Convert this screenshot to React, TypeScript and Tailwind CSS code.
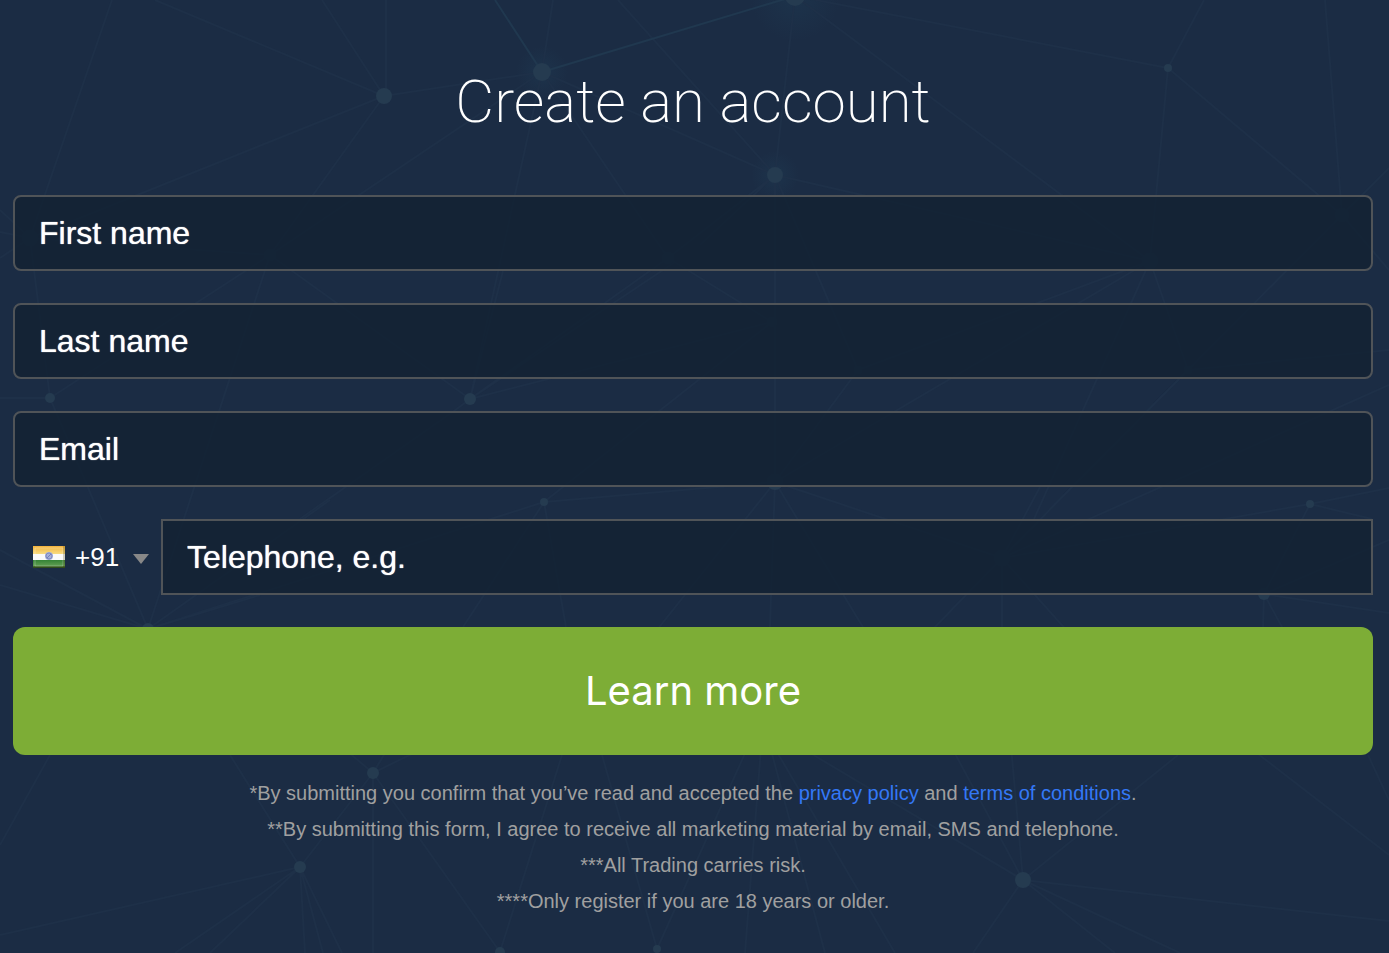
import { useState } from "react";

const NODES = [
  { x: 384, y: 96, r: 8 },
  { x: 542, y: 72, r: 9 },
  { x: 795, y: -4, r: 10 },
  { x: 775, y: 175, r: 8 },
  { x: 1168, y: 68, r: 4 },
  { x: 30, y: 238, r: 8 },
  { x: 270, y: 255, r: 6 },
  { x: 50, y: 398, r: 5 },
  { x: 470, y: 399, r: 6 },
  { x: 668, y: 258, r: 6 },
  { x: 1150, y: 261, r: 8 },
  { x: 1342, y: 215, r: 7 },
  { x: 772, y: 322, r: 5 },
  { x: 858, y: 370, r: 4 },
  { x: 1188, y: 370, r: 4 },
  { x: 775, y: 482, r: 8 },
  { x: 544, y: 502, r: 4 },
  { x: 1310, y: 504, r: 4 },
  { x: 1002, y: 558, r: 8 },
  { x: 1264, y: 594, r: 6 },
  { x: 148, y: 629, r: 6 },
  { x: 373, y: 773, r: 6 },
  { x: 300, y: 867, r: 6 },
  { x: 1023, y: 880, r: 8 },
  { x: 500, y: 952, r: 5 },
  { x: 657, y: 949, r: 4 },
];

// One fan of lines per hub
const LINES = [
  "M112 0L30 238M155 0L384 96M322 0L384 96M386 0V96M384 96L542 72M384 96L30 238M384 96L270 255",
  "M553 0L542 72L270 255M542 72L470 399M542 72L668 258M542 72L775 175L618 0",
  "M795 -4L775 175M795 -4L1168 68M795 -4L1150 261M1204 0L1168 68L1150 261M1168 68L1342 215M1325 0L1342 215L1389 168M1342 215L1389 270",
  "M775 175L668 258M775 175L700 245M775 175V482M775 175L858 370M775 175L1150 261",
  "M0 210L30 238M0 232L30 238M0 258L30 238L50 398M270 255L50 398M270 255L148 629M270 255L470 399M30 238L270 255",
  "M668 258L470 399M675 262L470 399M668 258L772 322M470 399L772 322M470 399L503 271M470 399L454 411L300 519",
  "M1150 261L858 370M1150 261L775 482M1150 261L1034 519M1150 261L1188 370M1342 215L1188 370L1002 558",
  "M0 398L50 398L148 629M858 370L775 482M772 322L544 502M1188 370L1389 350M1188 370L1002 558M1389 385L1002 558",
  "M544 502L775 482M544 502L484 595L463 627M544 502L566 627M544 502L148 629M775 482L637 655M775 482L766 740M775 482L895 680M775 482L1002 558",
  "M1002 558L1310 504L1389 488M1310 504L1372 519M1310 504L1264 594M1040 487L1002 558M1002 558L830 735M1002 558V700M1002 558L1160 735",
  "M0 550L148 629M0 585L148 629M330 500L148 629M260 595L148 629M1264 594L1262 660M1264 594L1300 660M1264 594L1389 613M1389 540L1264 594",
  "M50 755L0 845M230 755L300 867M340 745L373 773M390 745L373 773M430 745L373 773M373 773L300 867M373 773V953M373 773L500 952M500 952L562 755M657 949L602 755M657 949L760 720",
  "M300 867L0 935M300 867L175 953M300 867L210 953M300 867L305 953M300 867L323 953M300 867L342 953",
  "M762 735L745 953M767 735L825 953M767 735L895 953M780 735L1023 880M945 735L1023 880M1010 735L1023 880M1178 755L1023 880M1023 880L973 953M1023 880L1115 953M1023 880L1180 953M1023 880L1389 921M1240 740L1389 855M1368 755L1389 800",
];

const FIELDS = [
  { name: "firstName", label: "First name", type: "text" },
  { name: "lastName", label: "Last name", type: "text" },
  { name: "email", label: "Email", type: "email" },
];

const INPUT_CLASS =
  "h-[76px] w-full min-w-0 border-2 border-[#505458] bg-[#142335f5] px-6 text-[32px] text-white [text-shadow:0_0_1px_#fff] placeholder:text-white placeholder:opacity-100 focus:outline-none focus:border-[#7dad36]";

export default function App() {
  const [country, setCountry] = useState("+91");

  return (
    <main className="relative min-h-screen overflow-hidden bg-[#1b2c44] font-['Liberation_Sans',Arial,sans-serif] text-white">
      <NetworkBackground />
      <form
        className="relative flex flex-col gap-8 pt-[66px] pb-8 pl-[13px] pr-4"
        onSubmit={(event) => event.preventDefault()}
      >
        <h1 className="mb-[25px] text-center font-[Roboto,sans-serif] text-[60px] leading-[72px] font-extralight">
          Create an account
        </h1>

        {FIELDS.map((field) => (
          <input
            key={field.name}
            name={field.name}
            type={field.type}
            placeholder={field.label}
            aria-label={field.label}
            className={`${INPUT_CLASS} rounded-lg`}
          />
        ))}

        <div className="flex items-center">
          <div className="relative flex w-[148px] shrink-0 items-center pl-5">
            <IndiaFlag />
            <select
              aria-label="Country code"
              value={country}
              onChange={(event) => setCountry(event.target.value)}
              className="h-[76px] flex-1 appearance-none bg-transparent pl-[10px] text-[26px] text-white focus:outline-none"
            >
              <option value="+91">+91</option>
            </select>
            <svg className="pointer-events-none absolute right-3 mt-1 h-[10px] w-4" viewBox="0 0 16 10" aria-hidden="true">
              <path d="M0 0H16L8 10Z" fill="#888" />
            </svg>
          </div>
          <input
            name="phone"
            type="tel"
            placeholder="Telephone, e.g."
            aria-label="Telephone"
            className={INPUT_CLASS}
          />
        </div>

        <button
          type="submit"
          className="h-32 w-full cursor-pointer rounded-xl bg-[#7dad36] font-[Inter,sans-serif] text-[40px] text-white"
        >
          Learn more
        </button>

        <div className="-mt-3 text-center text-[20px] leading-9 text-[#a0a0a0]">
          <p>
            *By submitting you confirm that you’ve read and accepted the{" "}
            <a href="#privacy" className="text-[#3478f6]">privacy policy</a> and{" "}
            <a href="#terms" className="text-[#3478f6]">terms of conditions</a>.
          </p>
          <p>**By submitting this form, I agree to receive all marketing material by email, SMS and telephone.</p>
          <p>***All Trading carries risk.</p>
          <p>****Only register if you are 18 years or older.</p>
        </div>
      </form>
    </main>
  );
}

function NetworkBackground() {
  return (
    <svg
      className="absolute inset-0 h-full w-full"
      viewBox="0 0 1389 953"
      preserveAspectRatio="xMidYMid slice"
      aria-hidden="true"
    >
      <defs>
        <radialGradient id="glow">
          <stop offset="0" stopColor="#235069" stopOpacity="0.2" />
          <stop offset="1" stopColor="#235069" stopOpacity="0" />
        </radialGradient>
      </defs>
      <circle cx="795" cy="-4" r="45" fill="url(#glow)" />
      <circle cx="542" cy="72" r="26" fill="url(#glow)" />
      <circle cx="775" cy="175" r="24" fill="url(#glow)" />
      <g fill="none" stroke="#1e3048" strokeWidth="2">
        {LINES.map((d) => (
          <path key={d} d={d} />
        ))}
      </g>
      <path d="M495 0L542 72L795 -4" fill="none" stroke="#20384f" strokeWidth="2" />
      {NODES.map((node) => (
        <circle key={`${node.x}-${node.y}`} cx={node.x} cy={node.y} r={node.r} fill="#253b50" />
      ))}
    </svg>
  );
}

function IndiaFlag() {
  return (
    <svg className="h-[22px] w-8 shrink-0" viewBox="0 0 32 22" aria-hidden="true">
      <defs>
        <linearGradient id="saffron" x2="0" y2="1">
          <stop offset="0" stopColor="#f3b33c" />
          <stop offset="1" stopColor="#f8dc80" />
        </linearGradient>
        <linearGradient id="green" x2="0" y2="1">
          <stop offset="0" stopColor="#348336" />
          <stop offset="0.7" stopColor="#5d9c50" />
          <stop offset="1" stopColor="#153d12" />
        </linearGradient>
      </defs>
      <rect width="32" height="8" fill="url(#saffron)" />
      <rect y="8" width="32" height="6" fill="#fafafa" />
      <rect y="14" width="32" height="8" fill="url(#green)" />
      <path d="M2 2H30V20H2Z" fill="none" stroke="#fff" strokeOpacity="0.25" />
      <path d="M31 0V22M0 21H32" stroke="#4d4310" strokeOpacity="0.5" />
      <circle cx="16" cy="10" r="4" fill="#a5afd8" />
      <circle cx="16" cy="10" r="3" fill="none" stroke="#7f8bc2" />
      <path d="M14 12L18 8" stroke="#7482bc" />
    </svg>
  );
}
